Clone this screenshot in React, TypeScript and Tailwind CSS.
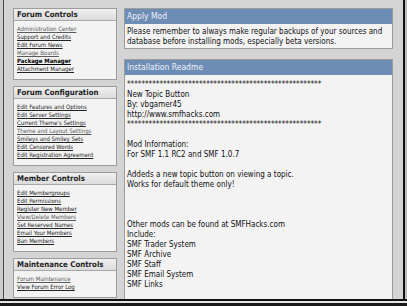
import React from "react";

const FONT = "font-['DejaVu_Sans_Condensed','DejaVu_Sans','Liberation_Sans',sans-serif]";

type LinkItem = { label: string; bold?: boolean; faint?: boolean };

const panels: { title: string; links: LinkItem[] }[] = [
  {
    title: "Forum Controls",
    links: [
      { label: "Administration Center", faint: true },
      { label: "Support and Credits" },
      { label: "Edit Forum News" },
      { label: "Manage Boards", faint: true },
      { label: "Package Manager", bold: true },
      { label: "Attachment Manager" },
    ],
  },
  {
    title: "Forum Configuration",
    links: [
      { label: "Edit Features and Options" },
      { label: "Edit Server Settings" },
      { label: "Current Theme's Settings" },
      { label: "Theme and Layout Settings", faint: true },
      { label: "Smileys and Smiley Sets" },
      { label: "Edit Censored Words" },
      { label: "Edit Registration Agreement" },
    ],
  },
  {
    title: "Member Controls",
    links: [
      { label: "Edit Membergroups" },
      { label: "Edit Permissions" },
      { label: "Register New Member" },
      { label: "View/Delete Members", faint: true },
      { label: "Set Reserved Names" },
      { label: "Email Your Members" },
      { label: "Ban Members" },
    ],
  },
  {
    title: "Maintenance Controls",
    links: [
      { label: "Forum Maintenance", faint: true },
      { label: "View Forum Error Log" },
    ],
  },
];

const STARS = "*".repeat(54);

const readme: string[] = [
  STARS,
  "New Topic Button",
  "By: vbgamer45",
  "http://www.smfhacks.com",
  STARS,
  "",
  "Mod Information:",
  "For SMF 1.1 RC2 and SMF 1.0.7",
  "",
  "Addeds a new topic button on viewing a topic.",
  "Works for default theme only!",
  "",
  "",
  "",
  "Other mods can be found at SMFHacks.com",
  "Include:",
  "SMF Trader System",
  "SMF Archive",
  "SMF Staff",
  "SMF Email System",
  "SMF Links",
  "",
  "SMFHacks.com also has premium mods for sale",
];

function SidePanel({ title, links }: { title: string; links: LinkItem[] }) {
  return (
    <div className="border border-[#9c9c9c] bg-[#f3f3f3]">
      <div className="h-[12px] bg-gradient-to-b from-[#f0f0f0] to-[#dcdcdc] border-b border-[#a8a8a8] pl-[3px] flex items-center text-[7.8px] font-bold text-[#1e1e1e] leading-none">
        {title}
      </div>
      <div className="pl-[3px] pt-[4px] pb-[6px] flex flex-col">
        {links.map((l) => (
          <a
            key={l.label}
            className={`block h-[8px] leading-[8px] text-[6px] underline whitespace-nowrap ${
              l.bold ? "font-bold text-black no-underline" : l.faint ? "text-[#5a5a5a]" : "text-[#222]"
            }`}
          >
            {l.label}
          </a>
        ))}
      </div>
    </div>
  );
}

export default function App() {
  return (
    <div className={`w-[407px] h-[306px] overflow-hidden bg-[#d4d4d4] flex flex-col ${FONT}`}>
      <div className="flex flex-1 min-h-0">
        <div className="w-[3px] bg-[#cdcdcd]" />
        <div className="w-px bg-[#4a4a4a]" />
        <main className="flex-1 min-w-0 flex gap-[7px] pl-[9px] pr-[10px] pt-[8px] overflow-hidden">
          <aside className="w-[104px] shrink-0 flex flex-col gap-[6px]">
            {panels.map((p) => (
              <SidePanel key={p.title} title={p.title} links={p.links} />
            ))}
          </aside>
          <section className="flex-1 min-w-0 flex flex-col gap-[10px]">
            <div className="border border-[#9c9c9c]">
              <div className="h-[15px] bg-[#6d8db5] pl-[2px] flex items-center text-[8.5px] text-[#eef2f8] leading-none">
                Apply Mod
              </div>
              <div className="bg-[#f3f3f3] pl-[2px] pt-[3px] pb-[1px] text-[8px] leading-[10px] text-[#111]">
                <div>Please remember to always make regular backups of your sources and</div>
                <div>database before installing mods, especially beta versions.</div>
              </div>
            </div>
            <div className="flex-1 border border-[#9c9c9c] border-b-0 flex flex-col min-h-0">
              <div className="h-[15px] bg-[#6d8db5] pl-[2px] flex items-center text-[8.5px] text-[#eef2f8] leading-none">
                Installation Readme
              </div>
              <div className="flex-1 bg-[#f3f3f3] pl-[2px] pt-[5px] text-[8px] leading-[10px] text-[#111] overflow-hidden">
                {readme.map((line, i) => (
                  <div key={i} className="h-[10px] whitespace-nowrap">
                    {line}
                  </div>
                ))}
              </div>
            </div>
          </section>
        </main>
        <div className="w-[2px] bg-[#111]" />
        <div className="w-[2px] bg-[#bcbcbc]" />
      </div>
      <div className="h-[2px] bg-[#111]" />
      <div className="h-[2px] bg-[#e6e6e6]" />
      <div className="h-[3px] bg-[#1a1a1a]" />
    </div>
  );
}
